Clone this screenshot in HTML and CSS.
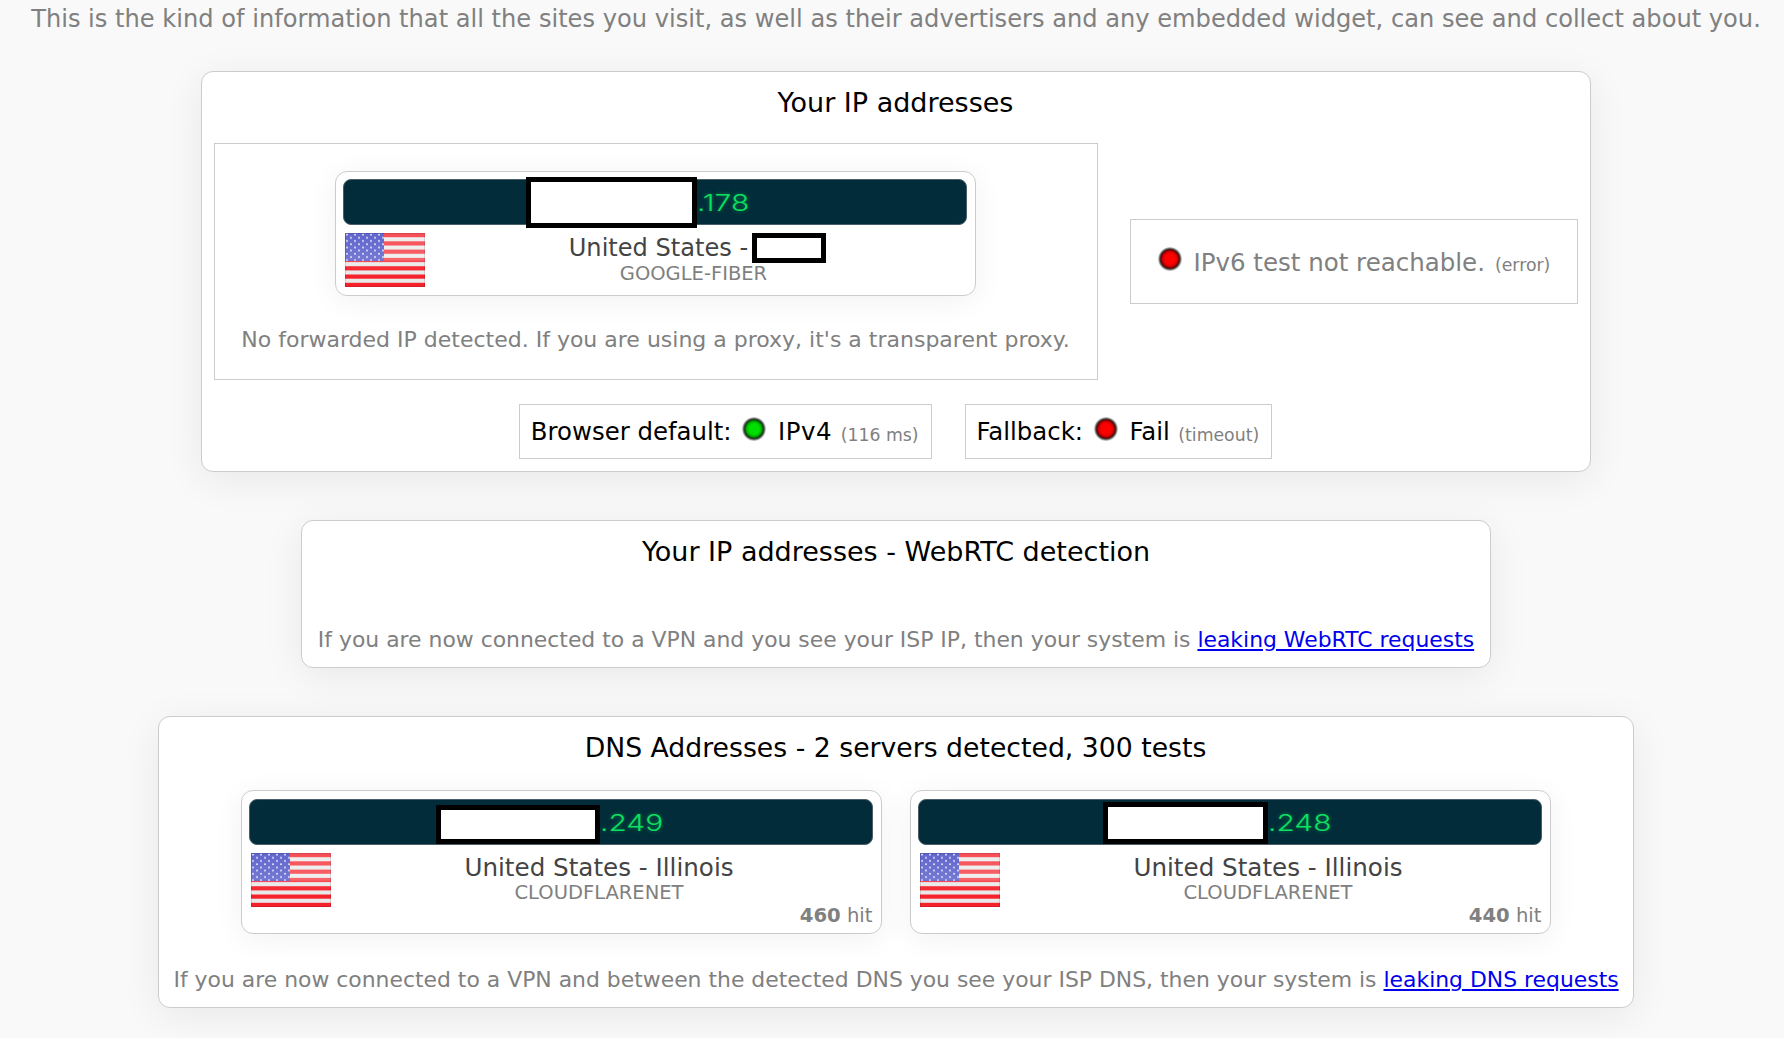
FILE: index.html
```html
<!DOCTYPE html>
<html lang="en">
<head>
<meta charset="utf-8">
<title>IP leak test</title>
<link rel="stylesheet" href="styles.css">
</head>
<body>
<svg class="defs" width="0" height="0" aria-hidden="true">
  <defs>
    <pattern id="stars" width="8" height="6.4" patternUnits="userSpaceOnUse">
      <circle cx="2" cy="1.6" r="1" fill="#e4e6f6"/>
      <circle cx="6" cy="4.8" r="1" fill="#e4e6f6"/>
    </pattern>
    <linearGradient id="gloss" x1="0" y1="0" x2="0" y2="1">
      <stop offset="0" stop-color="#fff" stop-opacity=".2"/>
      <stop offset=".5" stop-color="#fff" stop-opacity=".3"/>
      <stop offset=".55" stop-color="#fff" stop-opacity=".08"/>
      <stop offset=".8" stop-color="#fff" stop-opacity="0"/>
      <stop offset="1" stop-color="#fff" stop-opacity="0"/>
    </linearGradient>
    <symbol id="flag" viewBox="0 0 80 54">
      <rect width="80" height="54" fill="#e9e9e9"/>
      <g fill="#f5222c">
        <rect y="0" width="80" height="4.2"/>
        <rect y="8.3" width="80" height="4.2"/>
        <rect y="16.6" width="80" height="4.2"/>
        <rect y="24.9" width="80" height="4.2"/>
        <rect y="33.2" width="80" height="4.2"/>
        <rect y="41.5" width="80" height="4.2"/>
        <rect y="49.8" width="80" height="4.2"/>
      </g>
      <rect width="39" height="28" fill="#3a3fc0"/>
      <rect width="39" height="28" fill="url(#stars)"/>
      <rect width="80" height="54" fill="url(#gloss)"/>
      <rect x=".5" y=".5" width="79" height="53" fill="none" stroke="#000" stroke-opacity=".12"/>
    </symbol>
  </defs>
</svg>

<p class="intro">This is the kind of information that all the sites you visit, as well as their advertisers and any embedded widget, can see and collect about you.</p>

<section class="card card-ip">
  <h2 class="card-title">Your IP addresses</h2>
  <div class="ip-row">
    <div class="box box-main">
      <div class="ip-card">
        <div class="ip-bar"><span class="redact redact-ip"></span><span class="ip-tail">.178</span></div>
        <div class="ip-info">
          <svg class="flag"><use href="#flag"/></svg>
          <div class="ip-text">
            <div class="ip-place ip-place-own">United States -<span class="redact redact-region"></span></div>
            <div class="ip-isp">GOOGLE-FIBER</div>
          </div>
        </div>
      </div>
      <p class="note note-forward">No forwarded IP detected. If you are using a proxy, it's a transparent proxy.</p>
    </div>
    <div class="box box-v6">
      <span class="led led-red"></span><span class="v6-text">IPv6 test not reachable.</span><span class="small">(error)</span>
    </div>
  </div>
  <div class="status-row">
    <div class="box status"><span>Browser default:</span><span class="led led-green"></span><span class="proto">IPv4</span><span class="small">(116 ms)</span></div>
    <div class="box status"><span>Fallback:</span><span class="led led-red"></span><span>Fail</span><span class="small">(timeout)</span></div>
  </div>
</section>

<section class="card card-rtc">
  <h2 class="card-title">Your IP addresses - WebRTC detection</h2>
  <p class="note note-rtc">If you are now connected to a VPN and you see your ISP IP, then your system is <a href="#rtc">leaking WebRTC requests</a></p>
</section>

<section class="card card-dns">
  <h2 class="card-title">DNS Addresses - 2 servers detected, 300 tests</h2>
  <div class="dns-row">
    <div class="ip-card ip-card-dns">
      <div class="ip-bar"><span class="redact redact-dns-a"></span><span class="ip-tail">.249</span></div>
      <div class="ip-info">
        <svg class="flag"><use href="#flag"/></svg>
        <div class="ip-text">
          <div class="ip-place">United States - Illinois</div>
          <div class="ip-isp">CLOUDFLARENET</div>
          <div class="ip-hits"><b>460</b> hit</div>
        </div>
      </div>
    </div>
    <div class="ip-card ip-card-dns">
      <div class="ip-bar"><span class="redact redact-dns-b"></span><span class="ip-tail">.248</span></div>
      <div class="ip-info">
        <svg class="flag"><use href="#flag"/></svg>
        <div class="ip-text">
          <div class="ip-place">United States - Illinois</div>
          <div class="ip-isp">CLOUDFLARENET</div>
          <div class="ip-hits"><b>440</b> hit</div>
        </div>
      </div>
    </div>
  </div>
  <p class="note note-dns">If you are now connected to a VPN and between the detected DNS you see your ISP DNS, then your system is <a href="#dns">leaking DNS requests</a></p>
</section>
</body>
</html>
```

FILE: styles.css
```css
* { box-sizing: border-box; }
html, body { margin: 0; height: 1038px; overflow: hidden; }
body {
  background: #f9f9f9;
  font-family: "DejaVu Sans", Verdana, sans-serif;
  color: #808080;
  display: flex;
  flex-direction: column;
  align-items: center;
  padding-left: 8px;
}
.defs { position: absolute; }
.intro {
  margin: 0;
  height: 71px;
  padding-top: 5px;
  font-size: 24.13px;
  line-height: 28px;
  white-space: nowrap;
  text-align: center;
}
.card {
  background: #fff;
  border: 1px solid #ccc;
  border-radius: 12px;
  box-shadow: 0 8px 40px rgba(0, 0, 0, .07);
}
.card-title {
  margin: 0;
  font-size: 27px;
  font-weight: 400;
  color: #000;
  text-align: center;
  line-height: 30px;
}
.card-ip { width: 1390px; margin-left: -1px; height: 401px; padding: 16px 12px 0; }
.card-rtc { width: 1190px; height: 148px; padding: 16px 15px 0; margin-top: 48px; }
.card-dns { width: 1476px; margin: 48px 0 0 -1px; height: 292px; padding: 16px 15px 0; }
.card-dns .card-title { font-size: 26.7px; }
.ip-row {
  display: flex;
  align-items: center;
  justify-content: space-between;
  margin-top: 25px;
}
.box { border: 1px solid #ccc; background: #fff; }
.box-main { width: 884px; height: 237px; padding-top: 27px; }
.box-v6 {
  width: 448px;
  height: 85px;
  display: flex;
  align-items: center;
  padding-left: 27px;
  white-space: pre;
}
.v6-text { font-size: 24.5px; margin: 0 10px 0 12px; position: relative; top: 1px; }
.ip-card {
  width: 641px;
  height: 125px;
  margin: 0 auto;
  padding: 7px 8px 7px 7px;
  background: #fff;
  border: 1px solid #ccc;
  border-radius: 12px;
  box-shadow: 0 5px 30px rgba(0, 0, 0, .06);
}
.ip-bar {
  height: 46px;
  display: flex;
  justify-content: center;
  align-items: center;
  background: #022c39;
  border: 1px solid #49606a;
  border-radius: 8px;
}
.ip-tail {
  font-family: "Inter", sans-serif;
  font-weight: 300;
  font-size: 23px;
  padding-top: 2px;
  color: #0de060;
  text-shadow: 0 0 4px rgba(13, 224, 96, .5);
  transform: scaleX(1.3);
  transform-origin: left center;
}
.redact { display: inline-block; background: #fff; border: 5px solid #000; flex: none; }
.redact-ip { width: 171px; height: 51px; margin-left: -46px; }
.redact-region { width: 74px; height: 30px; vertical-align: -7px; margin-left: 4px; }
.redact-dns-a { width: 164px; height: 39px; align-self: flex-end; margin-left: -36px; }
.redact-dns-b { width: 165px; height: 42px; align-self: flex-end; margin-left: -40px; }
.ip-info { display: flex; padding: 8px 2px 0; }
.flag { width: 80px; height: 54px; flex: none; display: block; }
.ip-text { flex: 1; text-align: center; padding-right: 3px; }
.ip-place { font-size: 24.6px; line-height: 30px; color: #444; white-space: nowrap; }
.ip-place-own { font-size: 24.1px; padding-left: 8px; }
.ip-isp { font-size: 19.5px; line-height: 21px; color: #808080; }
.ip-hits { font-size: 19.6px; line-height: 24px; text-align: right; margin: 1px -5px 0 0; }
.note { margin: 0; font-size: 21.9px; line-height: 26px; text-align: center; white-space: nowrap; }
.note-forward { margin-top: 31px; font-size: 22px; }
.note-rtc { margin-top: 60px; }
.note-dns { margin-top: 33px; }
a { color: #00e; text-decoration: underline; }
.status-row { display: flex; justify-content: center; gap: 33px; margin-top: 24px; }
.status {
  height: 55px;
  padding: 0 12px 0 11px;
  display: flex;
  align-items: center;
  font-size: 24.4px;
  color: #000;
  white-space: pre;
}
.status .led { margin: 0 12px 0 10.5px; }
.status .small { margin-left: 8.5px; }
.proto { letter-spacing: .6px; }
.small { font-size: 17.3px; color: #808080; position: relative; top: 3px; }
.led {
  display: inline-block;
  flex: none;
  width: 24px;
  height: 24px;
  border-radius: 50%;
  position: relative;
  top: -3px;
}
.led-red { background: radial-gradient(circle closest-side, #ff0000 0 42%, #d00000 62%, #6a0000 76%, #444 84%, #999 92%, #ddd 100%); }
.led-green { background: radial-gradient(circle closest-side, #00e000 0 42%, #00b000 62%, #005000 76%, #444 84%, #999 92%, #ddd 100%); }
.dns-row { display: flex; justify-content: center; gap: 28px; margin-top: 27px; }
.ip-card-dns { height: 144px; padding-top: 8px; margin: 0; }
.ip-card-dns .ip-info { padding-top: 8px; }
.ip-card-dns .ip-place { line-height: 29px; }
```
